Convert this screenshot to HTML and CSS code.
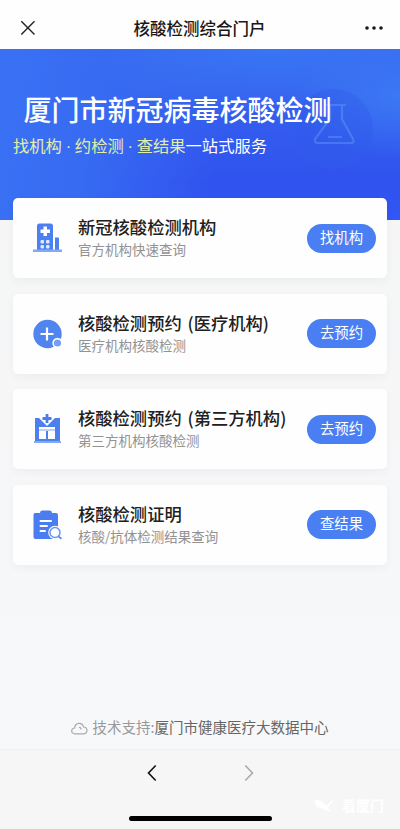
FILE: index.html
```html
<!DOCTYPE html>
<html lang="zh-CN">
<head>
<meta charset="utf-8">
<meta name="viewport" content="width=device-width, initial-scale=1">
<title>核酸检测综合门户</title>
<link rel="stylesheet" href="styles.css">
</head>
<body>
<header class="topbar">
  <svg class="close" width="16" height="16" viewBox="0 0 16 16"><path d="M1.3 1.3 14.5 14.5M14.5 1.3 1.3 14.5"/></svg>
  <h1>核酸检测综合门户</h1>
  <svg class="more" width="20" height="6" viewBox="0 0 20 6"><circle cx="3" cy="3" r="1.8"/><circle cx="10" cy="3" r="1.8"/><circle cx="17" cy="3" r="1.8"/></svg>
</header>
<main>
  <section class="hero">
    <svg class="flask" width="90" height="90" viewBox="0 0 90 90"><circle cx="45" cy="42" r="40"/><path d="M36 18H58M42 19V32L27 52Q26 56 30 56H63Q67 56 65 52L54 32V19M40 50H54"/></svg>
    <h2>厦门市新冠病毒核酸检测</h2>
    <p><span>找机构<i>·</i>约检测<i>·</i>查结果</span>一站式服务</p>
  </section>
  <section class="cards">
    <article class="card">
      <svg class="icon" width="30" height="32" viewBox="0 0 30 32"><path fill="#4c7ff0" d="M4 28V4Q4 1.5 6.500 1.500H17.500Q20 1.500 20 4V28H22V15.500H25Q26 15.500 26 16.500V28Z"/><path fill="#83a9f5" d="M0 27.500H29V30H0Z"/><path fill="#fff" d="M10.500 4.500H14V7.500H17V11H14V14H10.500V11H7.500V7.500H10.500Z"/><g fill="#dfeaff"><rect x="7.500" y="18" width="3.500" height="3.500" rx="1"/><rect x="13" y="18" width="3.500" height="3.500" rx="1"/><rect x="7.500" y="23" width="3.500" height="3.500" rx="1"/><rect x="13" y="23" width="3.500" height="3.500" rx="1"/></g></svg>
      <div class="copy"><h3>新冠核酸检测机构</h3><p>官方机构快速查询</p></div>
      <button>找机构</button>
    </article>
    <article class="card">
      <svg class="icon" width="30" height="32" viewBox="0 0 30 32"><circle cx="14.500" cy="16" r="14.200" fill="#5084ef"/><path d="M14 9.500V22.500M7.500 16H20.500" stroke="#fff" stroke-width="2.200"/><circle cx="24.500" cy="25" r="4.400" fill="#76a0f5" stroke="#fff" stroke-width="1.600"/></svg>
      <div class="copy"><h3>核酸检测预约<b>(</b>医疗机构<b class="end">)</b></h3><p>医疗机构核酸检测</p></div>
      <button>去预约</button>
    </article>
    <article class="card">
      <svg class="icon" width="30" height="32" viewBox="0 0 30 32"><path fill="#4d80ef" d="M2 5H6L14 13 22 5H27V29H2Z"/><path fill="#83a9f5" d="M1 28H28V30H1Z"/><path d="M14 1V10M9.500 5.500H18.500" stroke="#fff" stroke-width="5"/><path d="M14 1V10M9.500 5.500H18.500" stroke="#4b7cec" stroke-width="2.800"/><path fill="#fff" d="M6 14H22V16H6ZM6 18H13V26H6ZM15 18H22V26H15Z"/><path fill="#bed1fb" d="M6 16H22V18H6Z"/></svg>
      <div class="copy"><h3>核酸检测预约<b>(</b>第三方机构<b class="end">)</b></h3><p>第三方机构核酸检测</p></div>
      <button>去预约</button>
    </article>
    <article class="card">
      <svg class="icon" width="30" height="32" viewBox="0 0 30 32"><path fill="#4a7df0" d="M2 4H7Q7 1.500 9 1.500H17Q19 1.500 19 4H23Q25 4 25 6V28Q25 30 23 30H2.500Q.500 30 .500 28V6Q.500 4 2 4Z"/><path d="M7.500 12H18M7.500 17H14M7.500 22H12" stroke="#fff" stroke-width="2" stroke-linecap="round"/><circle cx="22" cy="23.500" r="6.800" fill="#fff"/><circle cx="22" cy="23.500" r="5" fill="#fff" stroke="#6a96ed" stroke-width="1.500"/><path d="M25.500 27.500 28.500 29.800" stroke="#5b8aed" stroke-width="1.800"/></svg>
      <div class="copy"><h3>核酸检测证明</h3><p>核酸/抗体检测结果查询</p></div>
      <button>查结果</button>
    </article>
  </section>
  <footer class="support">
    <svg width="17" height="13" viewBox="0 0 17 13"><path d="M4 11.800C-.5 11.800-.2 6 3.700 6 4 0 11.500-.2 12.500 5 17 5 17 11.800 13 11.800ZM8 5.500Q9.800 5 10 7.500"/></svg>
    <span>技术支持:</span><strong>厦门市健康医疗大数据中心</strong>
  </footer>
</main>
<nav class="bottom">
  <div class="arrows">
    <svg width="10" height="18" viewBox="0 0 10 18"><path d="M8.700 1.500 1.500 9 8.700 16.500"/></svg>
    <svg class="next" width="10" height="18" viewBox="0 0 10 18"><path d="M1.300 1.500 8.500 9 1.300 16.500"/></svg>
  </div>
  <div class="home"></div>
  <div class="mark"><svg width="20" height="16" viewBox="0 0 20 16"><path d="M0 2 8 5 11 9 20 1 13 11 17 15 10 13 1 9Z"/></svg><span>看厦门</span></div>
</nav>
</body>
</html>
```
FILE: styles.css
```css
* { box-sizing: border-box; }
body {
  margin: 0;
  height: 829px;
  display: flex;
  flex-direction: column;
  overflow: hidden;
  background: #f6f7f9;
  font-family: "Noto Sans CJK SC", sans-serif;
}
h1, h2, h3, p { margin: 0; font-weight: 400; white-space: nowrap; }
svg { flex: none; fill: none; }
.topbar {
  height: 49px;
  padding: 7px 16px 0 20px;
  display: flex;
  align-items: center;
  justify-content: space-between;
  background: #fefefe;
}
.topbar h1 { font-size: 16.5px; line-height: 24px; font-weight: 500; color: #181818; margin-right: 1px; }
.close { stroke: #222; stroke-width: 1.4; }
.more { fill: #181818; width: 20px; }
main { flex: 1; display: flex; flex-direction: column; background: linear-gradient(#f5f5f5, #f7f8fa); }
.hero {
  position: relative;
  height: 171px;
  padding: 40px 13px 0;
  color: #fff;
  background:
    radial-gradient(ellipse 110px 65px at 100% 27%, #3b79f4 0%, transparent 100%),
    radial-gradient(ellipse 190px 65px at 68% 0%, #3975f5 0%, transparent 100%),
    linear-gradient(100deg, #3a71f4 0%, #376bf2 24%, transparent 55%),
    linear-gradient(#3868ee, #3052ee 78%, #3157f5);
}
.hero h2 { position: relative; margin-left: 10.5px; font-size: 28px; line-height: 40px; font-weight: 500; }
.hero p { position: relative; margin-top: 4px; font-size: 16.3px; line-height: 25px; }
.hero p span { color: #e5eea6; }
.hero i { display: inline-block; width: 13px; text-align: center; font-style: normal; font-family: "Liberation Sans", sans-serif; line-height: 18px; }
.flask { position: absolute; left: 288px; top: 38px; stroke: #5586f5; stroke-width: 2.2; stroke-linejoin: round; opacity: .65; }
.flask circle { fill: #315deb; stroke: none; opacity: .65; }
.cards { position: relative; margin: -21.6px 13px 0; display: grid; gap: 15.4px; }
.card {
  height: 80px;
  padding: 0 11px 0 20px;
  display: flex;
  align-items: center;
  background: #fefefe;
  border-radius: 5px;
  box-shadow: 0 3px 8px rgba(0, 0, 0, .045);
}
.copy { flex: 1; margin: 0 0 3px 15px; }
.copy h3 { font-size: 17.3px; line-height: 25px; font-weight: 500; color: #202020; }
.copy b { display: inline-block; width: 12px; text-align: right; font-weight: 500; }
.copy b.end { width: 8px; text-align: left; }
.copy p { font-size: 13.5px; line-height: 20px; color: #929292; }
.card button {
  width: 69px;
  height: 29px;
  flex: none;
  border: 0;
  border-radius: 15px;
  padding: 0 0 3px;
  background: #497ff2;
  color: #fff;
  font: 14.4px/26px "Noto Sans CJK SC", sans-serif;
}
.support {
  margin-top: auto;
  height: 33px;
  display: flex;
  justify-content: center;
  font-size: 14.5px;
  line-height: 21px;
  color: #999;
}
.support svg { margin: 6px 4px 0 0; stroke: #aaa; stroke-width: 1.2; }
.support strong { font-weight: 400; color: #666; }
.bottom {
  position: relative;
  height: 80px;
  padding-top: 14px;
  border-top: 1px solid #efefef;
  background: #f6f6f6;
}
.arrows { display: flex; justify-content: center; gap: 87px; height: 18px; }
.arrows svg { stroke: #111; stroke-width: 1.6; }
.arrows .next { stroke: #aaa; }
.home { width: 143px; height: 5px; margin: 34px auto 0; border-radius: 3px; background: #000; }
.mark {
  position: absolute;
  left: 315px;
  top: 45px;
  display: flex;
  align-items: center;
  gap: 7px;
  color: #fff;
  font-size: 14px;
  line-height: 20px;
  font-weight: 700;
}
.mark svg { fill: #fff; }
```
